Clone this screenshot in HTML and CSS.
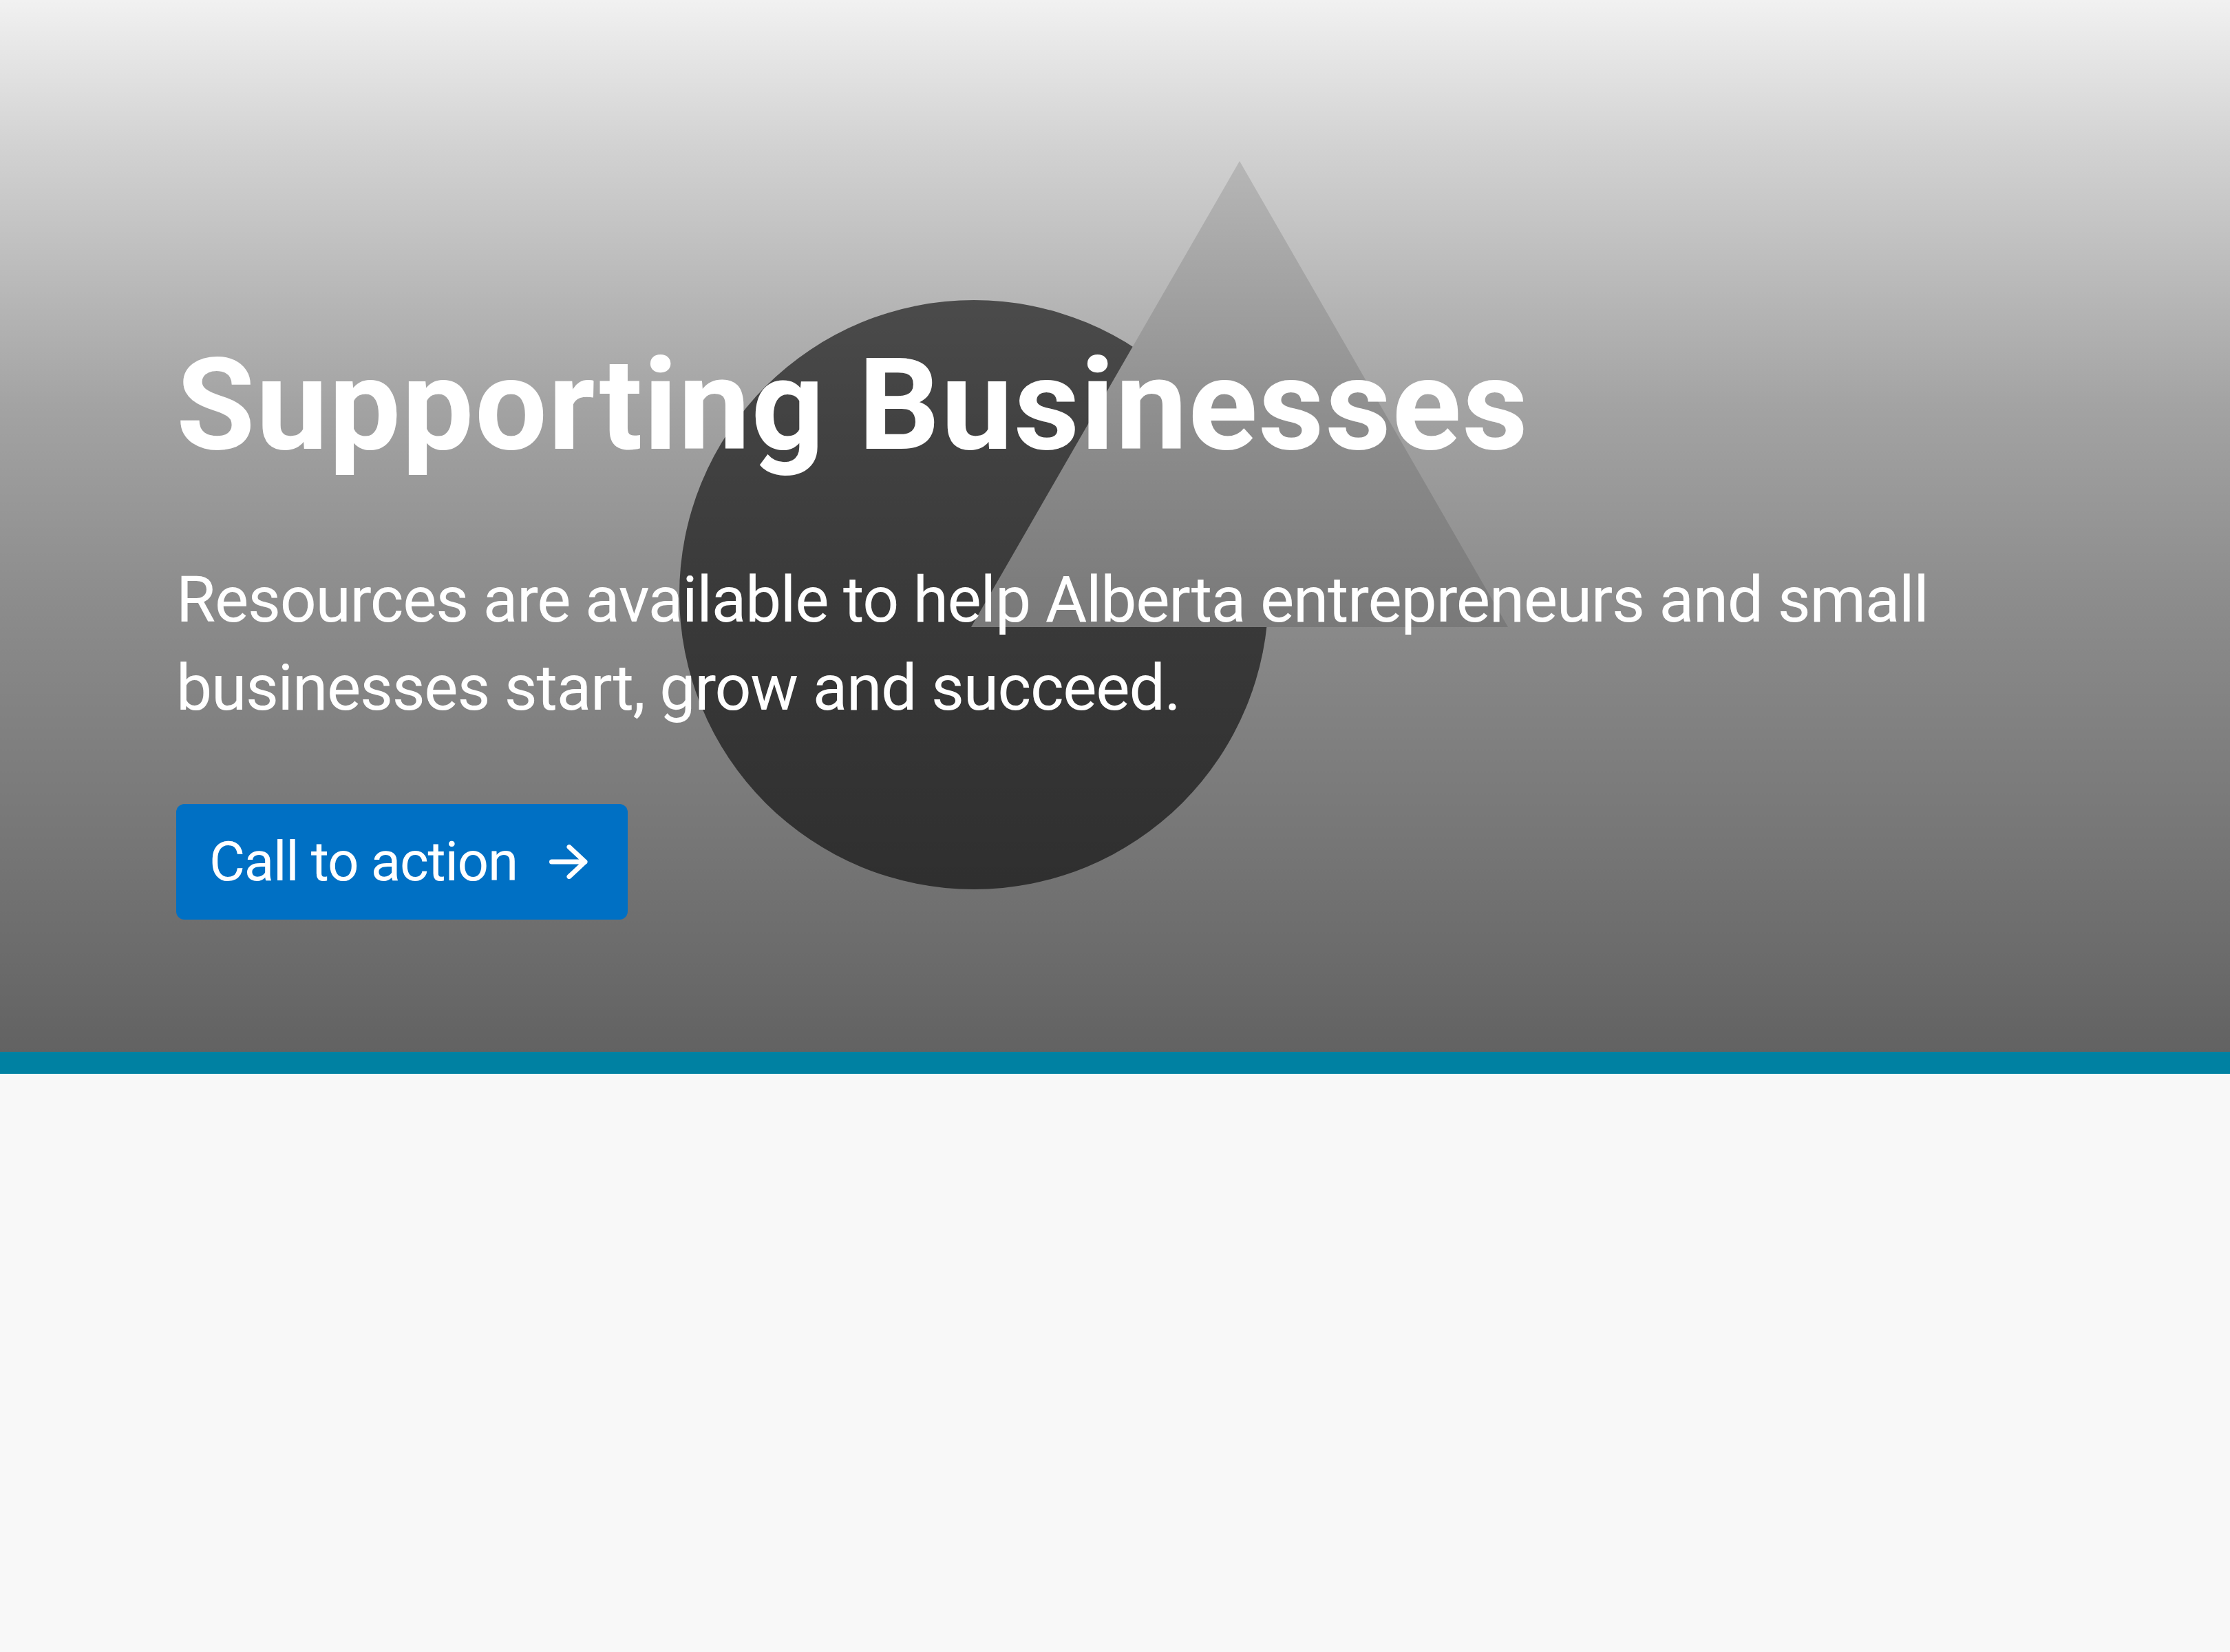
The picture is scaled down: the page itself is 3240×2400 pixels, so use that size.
FILE: index.html
```html
<!DOCTYPE html>
<html lang="en">
<head>
<meta charset="utf-8">
<title>Supporting Businesses</title>
<link rel="stylesheet" href="styles.css">
</head>
<body>
<section class="hero">
  <svg class="hero-art" viewBox="0 0 3240 1528" width="3240" height="1528" aria-hidden="true">
    <defs>
      <linearGradient id="shade" x1="0" y1="0" x2="0" y2="1">
        <stop offset="0" stop-color="#000" stop-opacity="0"/>
        <stop offset="0.135" stop-color="#000" stop-opacity="0.125"/>
        <stop offset="0.385" stop-color="#000" stop-opacity="0.324"/>
        <stop offset="0.57" stop-color="#000" stop-opacity="0.419"/>
        <stop offset="0.8" stop-color="#000" stop-opacity="0.51"/>
        <stop offset="1" stop-color="#000" stop-opacity="0.593"/>
      </linearGradient>
    </defs>
    <rect x="0" y="0" width="3240" height="1528" fill="#f1f1f1"/>
    <circle cx="1415" cy="864" r="428" fill="#636363"/>
    <polygon points="1801,234 2191,911 1411,911" fill="#d4d4d4"/>
    <rect x="0" y="0" width="3240" height="1528" fill="url(#shade)"/>
  </svg>
  <div class="hero-content">
    <h1 class="hero-title">Supporting Businesses</h1>
    <p class="hero-text">Resources are available to help Alberta entrepreneurs and small businesses start, grow and succeed.</p>
    <a class="hero-button" href="#">
      <span class="hero-button-label">Call to action</span>
      <svg class="hero-button-icon" viewBox="0 0 56 50" width="56" height="50" aria-hidden="true">
        <path d="M3.5 25H52M29 3.5L52 25L29 46.5" fill="none" stroke="#fff" stroke-width="7" stroke-linecap="round" stroke-linejoin="round"/>
      </svg>
    </a>
  </div>
</section>
<div class="accent-bar"></div>
<main class="page-body"></main>
</body>
</html>
```

FILE: styles.css
```css
html, body {
  margin: 0;
  padding: 0;
}

body {
  background: #f8f8f8;
  font-family: Roboto, "Liberation Sans", Arial, sans-serif;
  color: #ffffff;
  width: 3240px;
  min-height: 2400px;
}

.hero {
  position: relative;
  height: 1528px;
  overflow: hidden;
}

.hero-art {
  position: absolute;
  left: 0;
  top: 0;
  display: block;
}

.hero-content {
  position: relative;
  box-sizing: border-box;
  height: 100%;
  padding: 476px 0 0 256px;
  display: flex;
  flex-direction: column;
  align-items: flex-start;
}

.hero-title {
  margin: 0;
  font-size: 186px;
  line-height: 224px;
  font-weight: 700;
  letter-spacing: 1.5px;
}

.hero-text {
  margin: 108px 0 0 0;
  max-width: 2760px;
  font-size: 93px;
  line-height: 128px;
  font-weight: 400;
  letter-spacing: -1.3px;
}

.hero-button {
  margin-top: 104px;
  box-sizing: border-box;
  height: 168px;
  padding: 0 58px 0 48px;
  display: flex;
  align-items: center;
  gap: 46px;
  background: #0070c4;
  border-radius: 12px;
  color: #ffffff;
  text-decoration: none;
}

.hero-button-label {
  font-size: 80px;
  line-height: 94px;
  letter-spacing: -1.3px;
}

.hero-button-icon {
  display: block;
  flex: none;
}

.accent-bar {
  height: 32px;
  background: #0081a2;
}

.page-body {
  display: block;
  min-height: 840px;
  background: #f8f8f8;
}
```
